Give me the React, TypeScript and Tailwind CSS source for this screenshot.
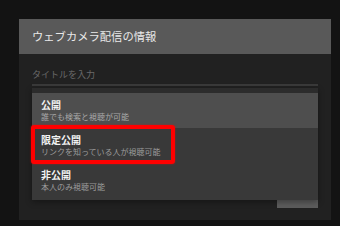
import React from "react";

const items = [
  { title: "公開", sub: "誰でも検索と視聴が可能", active: true },
  { title: "限定公開", sub: "リンクを知っている人が視聴可能", active: false },
  { title: "非公開", sub: "本人のみ視聴可能", active: false },
];

export default function App() {
  return (
    <div
      className="w-[340px] h-[226px] bg-[#131313] pt-[19px] pl-[19px] overflow-hidden"
      style={{ fontFamily: '"Noto Sans CJK JP", "Noto Sans", sans-serif' }}
    >
      <div className="relative w-[312px] h-[201px] flex flex-col bg-[#212121]">
        <div className="h-[35px] bg-[#595959] flex items-center pl-[13px] text-[11.3px] text-[#e8e8e8]">
          ウェブカメラ配信の情報
        </div>
        <div className="flex-1 flex flex-col px-[13px] pb-[12px]">
          <div className="mt-[11px] h-[21px] border-b-2 border-[#3a3a3a] flex items-center text-[9px] text-[#6a6a6a]">
            タイトルを入力
          </div>
          <div className="flex-1" />
          <div className="flex justify-end">
            <div className="w-[41px] h-[22px] bg-[#5c5c5c]" />
          </div>
        </div>

        <div className="absolute left-[13px] top-[69px] w-[286px] h-[112px] bg-[#393939] border-t-[5px] border-[#2c2c2c] shadow-[0_2px_6px_rgba(0,0,0,0.35)]">
          {items.map((it) => (
            <div
              key={it.title}
              className={`h-[35px] pl-[9px] flex flex-col justify-center ${
                it.active ? "bg-[#4e4e4e]" : ""
              }`}
            >
              <div className="text-[10px] leading-[12px] font-bold text-[#f2f2f2]">
                {it.title}
              </div>
              <div
                className={`text-[8px] leading-[11px] ${
                  it.active ? "text-[#a8a8a8]" : "text-[#9c9c9c]"
                }`}
              >
                {it.sub}
              </div>
            </div>
          ))}
          <div className="absolute left-[-1px] top-[31.5px] w-[143.5px] h-[39.5px] border-4 border-[#ff0000] rounded-[3px] shadow-[0_0_2px_rgba(255,0,0,0.6)]" />
        </div>
      </div>
    </div>
  );
}
